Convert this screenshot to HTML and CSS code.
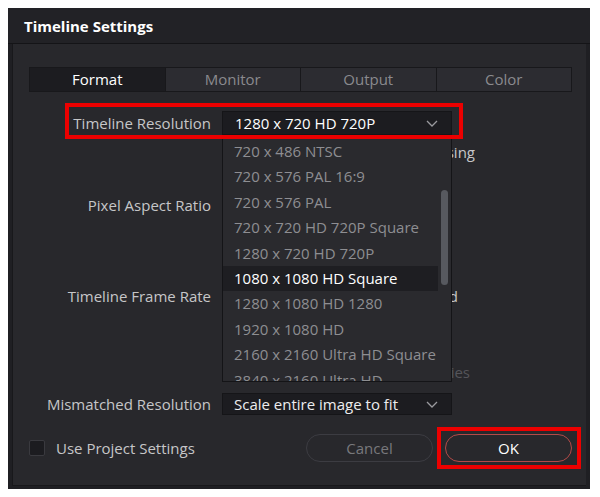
FILE: index.html
```html
<!DOCTYPE html>
<html>
    <head>
        <meta charset="utf-8">
        <link rel="stylesheet" href="styles.css">
    </head>

    <body>
        <div class="dialog">
            <div class="titlebar">Timeline Settings</div>

            <div class="panel">
                <div class="tabs">
                    <div class="tab active">Format</div>
                    <div class="tab">Monitor</div>
                    <div class="tab">Output</div>
                    <div class="tab">Color</div>
                </div>

                <div class="form">
                    <div class="label">Timeline Resolution</div>
                    <div class="field">
                        <div class="select">
                            <span>1280 x 720 HD 720P</span>
                            <svg class="chevron" width="12" height="7" viewBox="0 0 12 7"><path d="M1 1l5 5 5-5" fill="none" stroke="#9a9a9e" stroke-width="1.3"/></svg>
                        </div>

                        <div class="dropdown">
                            <div class="item">720 x 486 NTSC</div>
                            <div class="item">720 x 576 PAL 16:9</div>
                            <div class="item">720 x 576 PAL</div>
                            <div class="item">720 x 720 HD 720P Square</div>
                            <div class="item">1280 x 720 HD 720P</div>
                            <div class="item hover">1080 x 1080 HD Square</div>
                            <div class="item">1280 x 1080 HD 1280</div>
                            <div class="item">1920 x 1080 HD</div>
                            <div class="item">2160 x 2160 Ultra HD Square</div>
                            <div class="item">3840 x 2160 Ultra HD</div>
                            <div class="scrollbar"></div>
                        </div>
                    </div>

                    <div class="label"></div>
                    <div class="field"><span class="behind w-processing">processing</span></div>

                    <div class="label">Pixel Aspect Ratio</div>
                    <div class="field"></div>

                    <div class="label">Timeline Frame Rate</div>
                    <div class="field"><span class="behind w-interlaced">Interlaced</span></div>

                    <div class="label"></div>
                    <div class="field"><span class="behind dim w-properties">properties</span></div>

                    <div class="label">Mismatched Resolution</div>
                    <div class="field">
                        <div class="select small">
                            <span>Scale entire image to fit</span>
                            <svg class="chevron" width="12" height="7" viewBox="0 0 12 7"><path d="M1 1l5 5 5-5" fill="none" stroke="#9a9a9e" stroke-width="1.3"/></svg>
                        </div>
                    </div>
                </div>

                <div class="footer">
                    <div class="checkbox"></div>
                    <div class="check-label">Use Project Settings</div>
                    <div class="spacer"></div>
                    <button class="btn">Cancel</button>
                    <button class="btn primary">OK</button>
                </div>
            </div>

            <div class="mark mark-res"></div>
            <div class="mark mark-ok"></div>
        </div>
    </body>
</html>
```

FILE: styles.css
```css
body {
    margin: 8px;
    background: #fff;
    font-family: "Open Sans", "Noto Sans", sans-serif;
}

.dialog {
    position: relative;
    width: 582px;
    height: 481px;
    background: #1f1f23;
    display: flex;
    flex-direction: column;
}

.titlebar {
    height: 33px;
    line-height: 33px;
    padding: 2px 0 0 16px;
    color: #fff;
    font-weight: 700;
    font-size: 15px;
    background: #222226;
    border-bottom: 1px solid #141417;
}

.panel {
    flex: 1;
    margin: 0 4px 3px 4px;
    padding: 23px 14px 0 16px;
    background: #28282c;
    border-left: 1px solid #18181b;
    border-bottom: 1px solid #18181b;
}

.tabs {
    display: flex;
    height: 25px;
    border: 1px solid #18181b;
    box-sizing: border-box;
}

.tab {
    flex: 1;
    text-align: center;
    line-height: 23px;
    font-size: 15px;
    color: #8a8a8e;
    background: #2c2c31;
    border-left: 1px solid #18181b;
}

.tab:first-child {
    border-left: 0;
}

.tab.active {
    background: #1c1c20;
    color: #fff;
}

.form {
    display: grid;
    grid-template-columns: 182px 230px;
    grid-template-rows: 24px 34px 72px 110px 42px 22px;
    column-gap: 11px;
    margin-top: 19px;
}

.label {
    text-align: right;
    align-self: center;
    font-size: 15px;
    color: #c6c6c8;
}

.field {
    position: relative;
    align-self: center;
}

.select {
    display: flex;
    align-items: center;
    height: 24px;
    padding: 0 12px;
    background: #1c1c20;
    border: 1px solid #151518;
    box-sizing: border-box;
    font-size: 15px;
    color: #fff;
}

.select.small {
    height: 22px;
    padding-left: 11px;
    color: #ececee;
}

.select span {
    flex: 1;
    white-space: nowrap;
}

.chevron {
    margin-right: 1px;
}

.dropdown {
    position: absolute;
    top: 24px;
    left: 0;
    width: 230px;
    height: 247px;
    padding-top: 4px;
    box-sizing: border-box;
    overflow: hidden;
    background: #2a2a2e;
    border: 1px solid #141417;
    border-top: 0;
    z-index: 2;
}

.item {
    height: 25.4px;
    line-height: 25.4px;
    padding-left: 11px;
    margin-right: 13px;
    font-size: 15px;
    color: #8e8e92;
    white-space: nowrap;
}

.item.hover {
    background: #1e1e22;
    color: #fff;
}

.scrollbar {
    position: absolute;
    top: 55px;
    right: 3px;
    width: 7px;
    height: 95px;
    border-radius: 4px;
    background: #57595f;
}

.behind {
    display: block;
    text-align: right;
    white-space: nowrap;
    font-size: 15px;
    color: #c6c6c8;
}

.behind.dim {
    color: #55555a;
}

.w-processing {
    width: 253px;
}

.w-interlaced {
    width: 236px;
}

.w-properties {
    width: 248px;
}

.footer {
    display: flex;
    align-items: center;
    height: 28px;
    margin-top: 19px;
}

.checkbox {
    width: 16px;
    height: 16px;
    box-sizing: border-box;
    background: #1c1c20;
    border: 1px solid #3a3a3f;
    border-radius: 2px;
}

.check-label {
    margin-left: 11px;
    font-size: 15px;
    color: #c6c6c8;
}

.spacer {
    flex: 1;
}

.btn {
    width: 127px;
    height: 28px;
    margin-left: 12px;
    border: 1px solid #3c3c42;
    border-radius: 14px;
    background: #28282c;
    color: #78787c;
    font-family: inherit;
    font-size: 15px;
}

.btn.primary {
    border-color: #b44a48;
    color: #fff;
}

.btn:focus {
    outline: none;
}

.mark {
    position: absolute;
    border: 4px solid #ec0000;
    box-sizing: border-box;
    z-index: 3;
}

.mark-res {
    left: 57px;
    top: 95px;
    width: 398px;
    height: 36px;
}

.mark-ok {
    left: 429px;
    top: 419px;
    width: 144px;
    height: 42px;
}
```
